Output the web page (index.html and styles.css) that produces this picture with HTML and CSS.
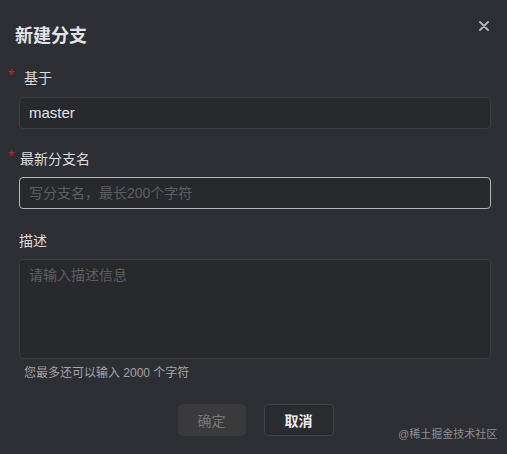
FILE: index.html
```html
<!DOCTYPE html>
<html lang="zh-CN">
<head>
<meta charset="utf-8">
<title>新建分支</title>
<link rel="stylesheet" href="styles.css">
</head>
<body>
<div class="dialog">
  <div class="header">
    <h1 class="title">新建分支</h1>
    <button class="close" aria-label="关闭">
      <svg width="10" height="10" viewBox="0 0 10 10"><path d="M1 1L9 9M9 1L1 9" stroke="#b4b5b8" stroke-width="1.8" stroke-linecap="round"/></svg>
    </button>
  </div>
  <form class="form">
    <div class="item item-base">
      <label class="label req"><span class="star">*</span><span class="label-text spaced">基于</span></label>
      <div class="input filled">master</div>
    </div>
    <div class="item item-name">
      <label class="label req"><span class="star">*</span><span class="label-text">最新分支名</span></label>
      <div class="input focused placeholder">写分支名，最长200个字符</div>
    </div>
    <div class="item item-desc">
      <label class="label"><span class="label-text">描述</span></label>
      <div class="textarea placeholder">请输入描述信息</div>
      <div class="hint">您最多还可以输入 2000 个字符</div>
    </div>
  </form>
  <div class="footer">
    <button class="btn btn-ok" type="button">确定</button>
    <button class="btn btn-cancel" type="button">取消</button>
  </div>
</div>
<div class="watermark">@稀土掘金技术社区</div>
</body>
</html>
```

FILE: styles.css
```css
* { box-sizing: border-box; }
html, body { margin: 0; padding: 0; }
body {
  width: 507px;
  height: 454px;
  background: #2e2f34;
  font-family: "Liberation Sans", "Noto Sans CJK SC", sans-serif;
  color: #dcdcde;
  overflow: hidden;
  position: relative;
}
.dialog {
  display: flex;
  flex-direction: column;
  padding: 24px 16px 0 0;
}
.header {
  display: flex;
  justify-content: space-between;
  align-items: flex-start;
  padding-left: 15px;
}
.title {
  margin: 0;
  font-size: 18px;
  line-height: 24px;
  font-weight: 700;
  color: #e4e4e6;
}
.close {
  background: none;
  border: 0;
  padding: 0;
  margin: -3px 2px 0 0;
  width: 10px;
  height: 10px;
  display: flex;
}
.form {
  display: flex;
  flex-direction: column;
}
.item { display: flex; flex-direction: column; }
.item-base { margin-top: 19px; }
.item-name { margin-top: 19px; }
.item-desc { margin-top: 21px; }
.label {
  display: flex;
  align-items: flex-start;
  font-size: 14px;
  line-height: 22px;
  height: 22px;
  color: #dcdcde;
  margin-bottom: 7px;
  padding-left: 19px;
}
.label.req { padding-left: 8px; }
.star {
  color: #c7202c;
  width: 12px;
  font-size: 12px;
  line-height: 16px;
  font-family: "Noto Sans", sans-serif;
}
.label-text.spaced { padding-left: 4px; }
.item-base .label { margin-bottom: 8px; }
.input, .textarea {
  margin-left: 19px;
  background: #28292d;
  border: 1px solid #3b3c41;
  border-radius: 4px;
  font-size: 14px;
  padding: 0 9px;
}
.input {
  height: 32px;
  line-height: 30px;
}
.filled { color: #e2e2e4; font-size: 15px; }
.focused { border-color: #b3b3b5; }
.placeholder { color: #5c5d62; }
.textarea {
  height: 100px;
  padding-top: 4px;
  line-height: 22px;
}
.hint {
  margin: 5px 0 0 24px;
  font-size: 12px;
  line-height: 18px;
  color: #a3a3a6;
}
.footer {
  display: flex;
  justify-content: center;
  gap: 18px;
  margin-top: 22px;
  padding-left: 20px;
}
.btn {
  height: 32px;
  font-family: inherit;
  font-size: 14px;
  border-radius: 4px;
  padding: 0;
}
.btn-ok {
  width: 68px;
  background: #3a3a3c;
  border: 1px solid #3a3a3c;
  color: #76767a;
}
.btn-cancel {
  width: 70px;
  background: #2a2b2f;
  border: 1px solid #404146;
  color: #ececee;
  font-weight: 600;
}
.watermark {
  position: absolute;
  left: 398px;
  top: 426px;
  font-size: 11px;
  line-height: 16px;
  color: #8b8c90;
}
```
